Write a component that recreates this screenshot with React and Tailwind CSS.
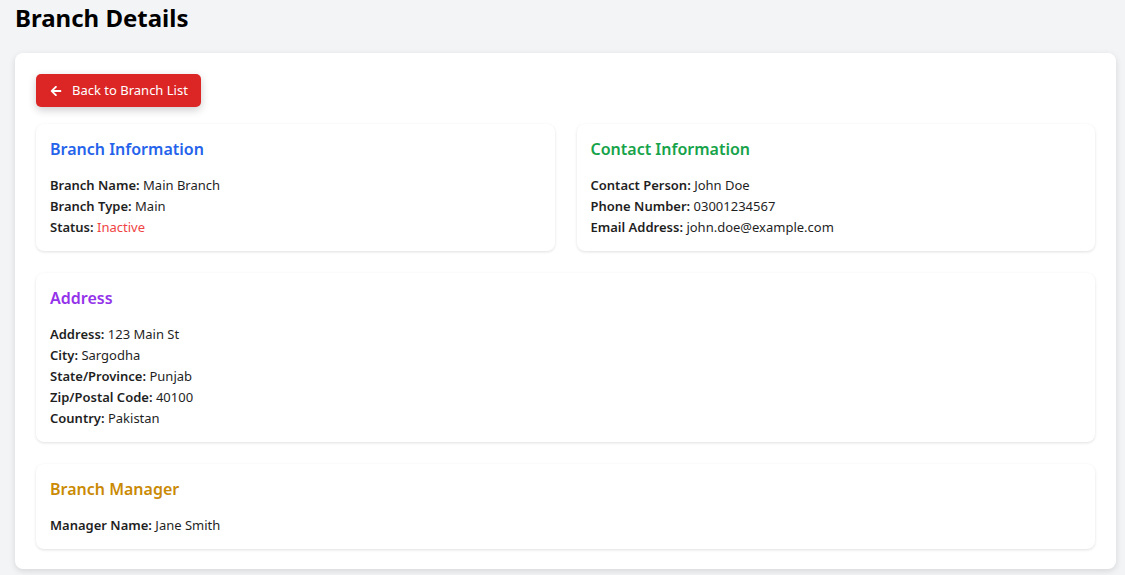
import React from "react";
import { FaArrowLeft } from "react-icons/fa";

const Row = ({ label, value, valueClass = "" }) => (
  <p className="text-[13px] leading-[21px] text-[#1f1f1f]">
    <span className="font-semibold">{label}:</span>{" "}
    <span className={valueClass}>{value}</span>
  </p>
);

const Card = ({ title, color, children }) => (
  <div className="bg-white rounded-lg shadow-[0_1px_3px_rgba(0,0,0,0.12)] px-[14px] pt-[15px] pb-[13px]">
    <h2 className={`text-[16px] leading-[20px] font-semibold mb-[16px] ${color}`}>{title}</h2>
    {children}
  </div>
);

export default function App() {
  return (
    <div
      className="min-h-[575px] bg-[#f3f4f6] pt-[4px]"
      style={{ fontFamily: '"Noto Sans", "Open Sans", sans-serif' }}
    >
      <h1 className="ml-[15px] text-[24px] leading-[28px] font-bold text-black">Branch Details</h1>
      <div className="ml-[15px] mt-[21px] w-[1101px] bg-white rounded-lg shadow-[0_2px_6px_rgba(0,0,0,0.12)] p-[21px] pb-[20px]">
        <button className="flex items-center h-[33px] w-[165px] pl-[14px] bg-[#dc2626] text-white text-[13px] rounded-[5px] shadow-[0_3px_8px_rgba(0,0,0,0.2)]">
          <FaArrowLeft className="w-[12px] h-[12px] mr-[10px]" />
          Back to Branch List
        </button>
        <div className="mt-[17px] flex flex-col gap-[22px]">
          <div className="grid grid-cols-2 gap-[22px]">
            <Card title="Branch Information" color="text-[#2563eb]">
              <Row label="Branch Name" value="Main Branch" />
              <Row label="Branch Type" value="Main" />
              <Row label="Status" value="Inactive" valueClass="text-[#ef4444]" />
            </Card>
            <Card title="Contact Information" color="text-[#16a34a]">
              <Row label="Contact Person" value="John Doe" />
              <Row label="Phone Number" value="03001234567" />
              <Row label="Email Address" value="john.doe@example.com" />
            </Card>
          </div>
          <Card title="Address" color="text-[#9333ea]">
            <Row label="Address" value="123 Main St" />
            <Row label="City" value="Sargodha" />
            <Row label="State/Province" value="Punjab" />
            <Row label="Zip/Postal Code" value="40100" />
            <Row label="Country" value="Pakistan" />
          </Card>
          <Card title="Branch Manager" color="text-[#ca8a04]">
            <Row label="Manager Name" value="Jane Smith" />
          </Card>
        </div>
      </div>
    </div>
  );
}
